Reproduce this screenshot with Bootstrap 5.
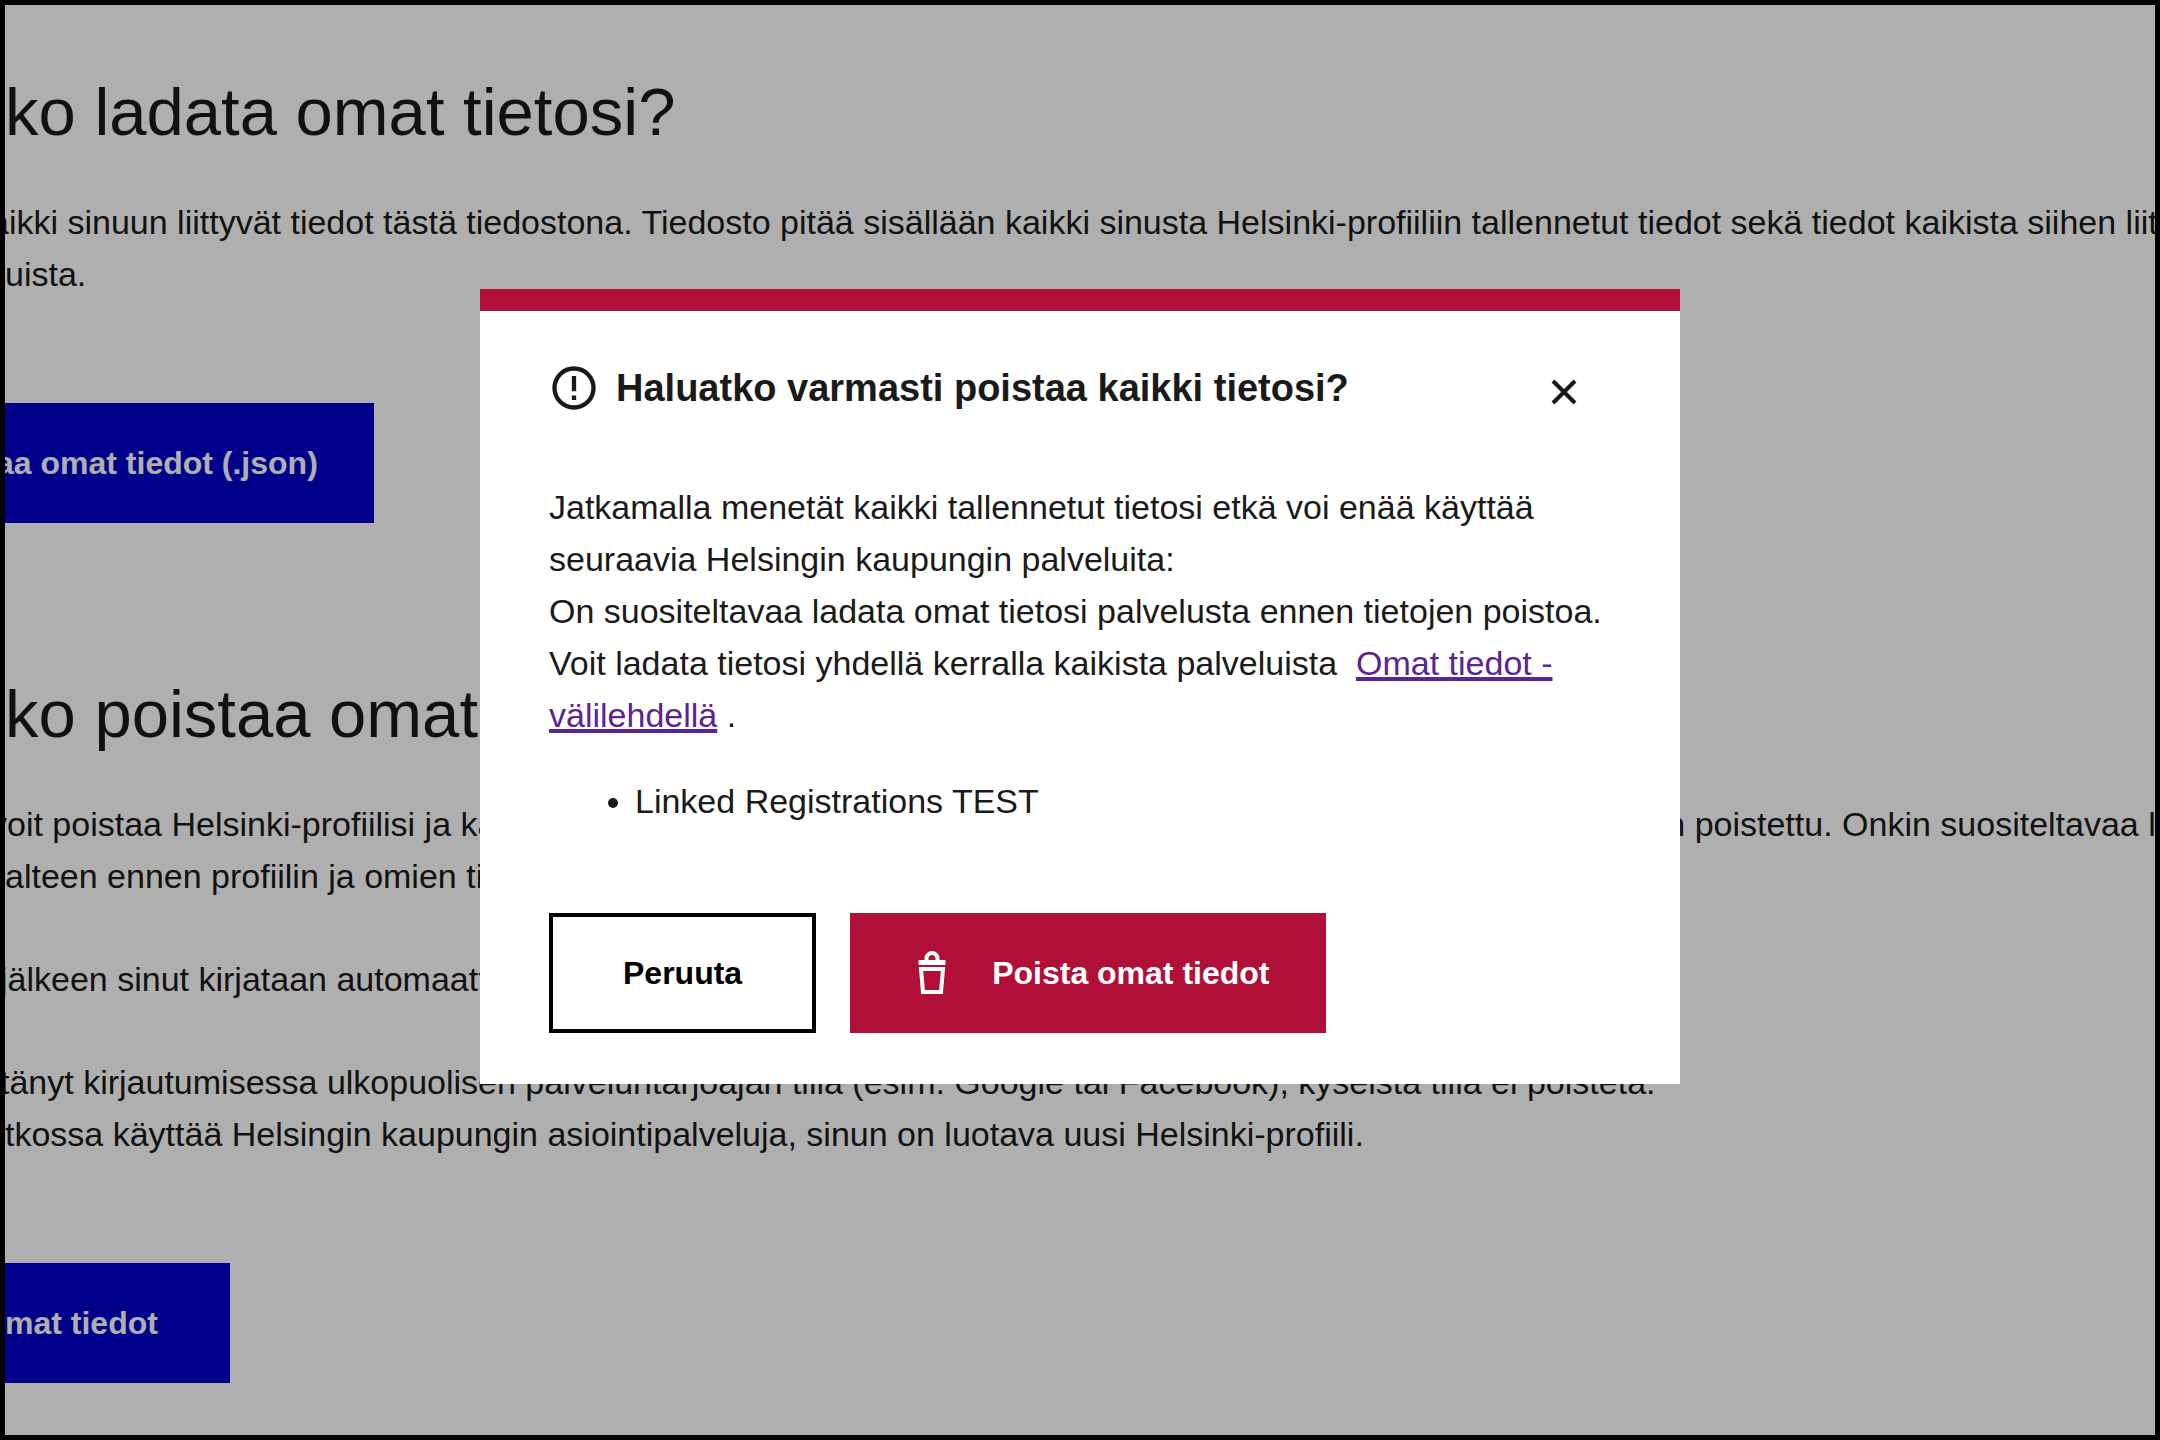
<!DOCTYPE html>
<html lang="fi">
<head>
<meta charset="utf-8">
<meta name="viewport" content="width=device-width, initial-scale=1">
<title>Helsinki-profiili</title>
<link href="https://cdn.jsdelivr.net/npm/bootstrap@5.3.0/dist/css/bootstrap.min.css" rel="stylesheet">
<style>
  body {
    min-height: 100vh;
    border: 5px solid #000;
    font-family: "Liberation Sans", Arial, sans-serif;
    font-size: 34px;
    line-height: 52px;
    color: #1a1a1a;
    background: #fff;
    overflow: hidden;
  }
  .profile-page { padding: 67px 0 51px; white-space: nowrap; }
  .profile-page h1 { font-size: 67px; line-height: 80px; font-weight: 400; margin: 0 0 44px; }
  .profile-page p { margin: 0 0 51px; }
  .profile-page section + section { margin-top: 151px; }
  .profile-page .btn { margin-top: 52px; padding-left: 0; border-left: 0; }
  .cut-wide { margin-left: -15px; }
  .cut-narrow { margin-left: -5px; }
  .btn {
    --bs-btn-border-radius: 0;
    --bs-btn-border-width: 4px;
    --bs-btn-font-size: 32px;
    --bs-btn-font-weight: 700;
    --bs-btn-line-height: 52px;
    --bs-btn-padding-y: 30px;
    --bs-btn-padding-x: 52px;
  }
  .btn-bus { --bs-btn-color: #fff; --bs-btn-bg: #0000c9; --bs-btn-border-color: #0000c9; --bs-btn-padding-x: 68px; }
  .btn-json { --bs-btn-padding-x: 52px; margin-left: -9px; }
  .btn-brick { --bs-btn-color: #fff; --bs-btn-bg: #b01038; --bs-btn-border-color: #b01038; }
  .btn-brick svg { margin-right: 34px; }
  .btn-cancel { --bs-btn-color: #000; --bs-btn-bg: #fff; --bs-btn-border-color: #000; --bs-btn-padding-x: 70px; }
  .modal-backdrop { --bs-backdrop-opacity: .314; inset: 0; width: auto; height: auto; }
  .modal-dialog { max-width: 1200px; margin-top: 289px; }
  .modal-content { border: 0; border-top: 22px solid #b01038; border-radius: 0; color: #1a1a1a; }
  .modal-header { padding: 46px 69px 0 68px; border: 0; }
  .modal-title { font-size: 38px; line-height: 62px; font-weight: 700; }
  .modal-body { padding: 62px 69px 0; }
  .modal-body p { margin: 0 0 34px; }
  .modal-body ul { margin: 0; padding-left: 86px; }
  .modal-body a { color: #5a2593; text-decoration-thickness: 4px; text-underline-offset: 2px; }
  .modal-footer { padding: 86px 69px 51px; border: 0; gap: 34px; }
  .modal-footer > * { margin: 0; }
  .close-x { background: none; border: 0; padding: 20px 12px 12px; margin-right: 22px; line-height: 0; }
</style>
</head>
<body>
<main class="profile-page overflow-hidden">
  <section>
    <h1>ko ladata omat tietosi?</h1>
    <p><span class="cut-wide">aikki sinuun liittyvät tiedot tästä tiedostona. Tiedosto pitää sisällään kaikki sinusta Helsinki-profiiliin tallennetut tiedot sekä tiedot kaikista siihen liittyvistä</span><br>uista.</p>
    <button type="button" class="btn btn-bus btn-json">aa omat tiedot (.json)</button>
  </section>
  <section>
    <h1>ko poistaa omat tietosi?</h1>
    <p><span class="cut-wide">voit poistaa Helsinki-profiilisi ja kaikki siihen liitetyt tiedot. Huomioithan, ettei profiilia voi enää palauttaa, jos se on poistettu. Onkin suositeltavaa ladata</span><br>alteen ennen profiilin ja omien tietojesi poistamista.</p>
    <p><span class="cut-narrow">jälkeen sinut kirjataan automaattisesti ulos palvelusta.</span></p>
    <p><span class="cut-narrow">tänyt kirjautumisessa ulkopuolisen palveluntarjoajan tiliä (esim. Google tai Facebook), kyseistä tiliä ei poisteta.</span><br>tkossa käyttää Helsingin kaupungin asiointipalveluja, sinun on luotava uusi Helsinki-profiili.</p>
    <button type="button" class="btn btn-bus">mat tiedot</button>
  </section>
</main>

<div class="modal-backdrop show"></div>
<div class="modal d-block" role="dialog" aria-modal="true" aria-labelledby="dialog-title">
  <div class="modal-dialog">
    <div class="modal-content">
      <div class="modal-header">
        <div class="d-flex align-items-center">
          <svg width="52" height="52" viewBox="0 0 24 24" fill="none" stroke="#1a1a1a" stroke-width="2" aria-hidden="true"><circle cx="12" cy="12" r="9"/><path d="M12 6.500v7M12 15.500v2"/></svg>
          <h2 class="modal-title ms-3" id="dialog-title">Haluatko varmasti poistaa kaikki tietosi?</h2>
        </div>
        <button type="button" class="close-x" aria-label="Sulje"><svg width="26" height="26" viewBox="0 0 26 26" stroke="#1a1a1a" stroke-width="4" aria-hidden="true"><path d="M2 2l22 22M24 2L2 24"/></svg></button>
      </div>
      <div class="modal-body">
        <p>Jatkamalla menetät kaikki tallennetut tietosi etkä voi enää käyttää seuraavia Helsingin kaupungin palveluita:<br>On suositeltavaa ladata omat tietosi palvelusta ennen tietojen poistoa. Voit ladata tietosi yhdellä kerralla kaikista palveluista&nbsp; <a href="#">Omat tiedot -välilehdellä</a> .</p>
        <ul><li>Linked Registrations TEST</li></ul>
      </div>
      <div class="modal-footer justify-content-start">
        <button type="button" class="btn btn-cancel">Peruuta</button>
        <button type="button" class="btn btn-brick d-flex align-items-center">
          <svg width="52" height="52" viewBox="0 0 52 52" fill="none" stroke="#fff" stroke-width="4" aria-hidden="true"><path d="M12.500 15.500h27" stroke-width="5"/><path d="M20.500 14v-2.500a5.500 5.500 0 0 1 11 0V14M15 22h22l-2 23H17z"/></svg>
          <span>Poista omat tiedot</span>
        </button>
      </div>
    </div>
  </div>
</div>
<script src="https://cdn.jsdelivr.net/npm/bootstrap@5.3.0/dist/js/bootstrap.bundle.min.js"></script>
</body>
</html>
